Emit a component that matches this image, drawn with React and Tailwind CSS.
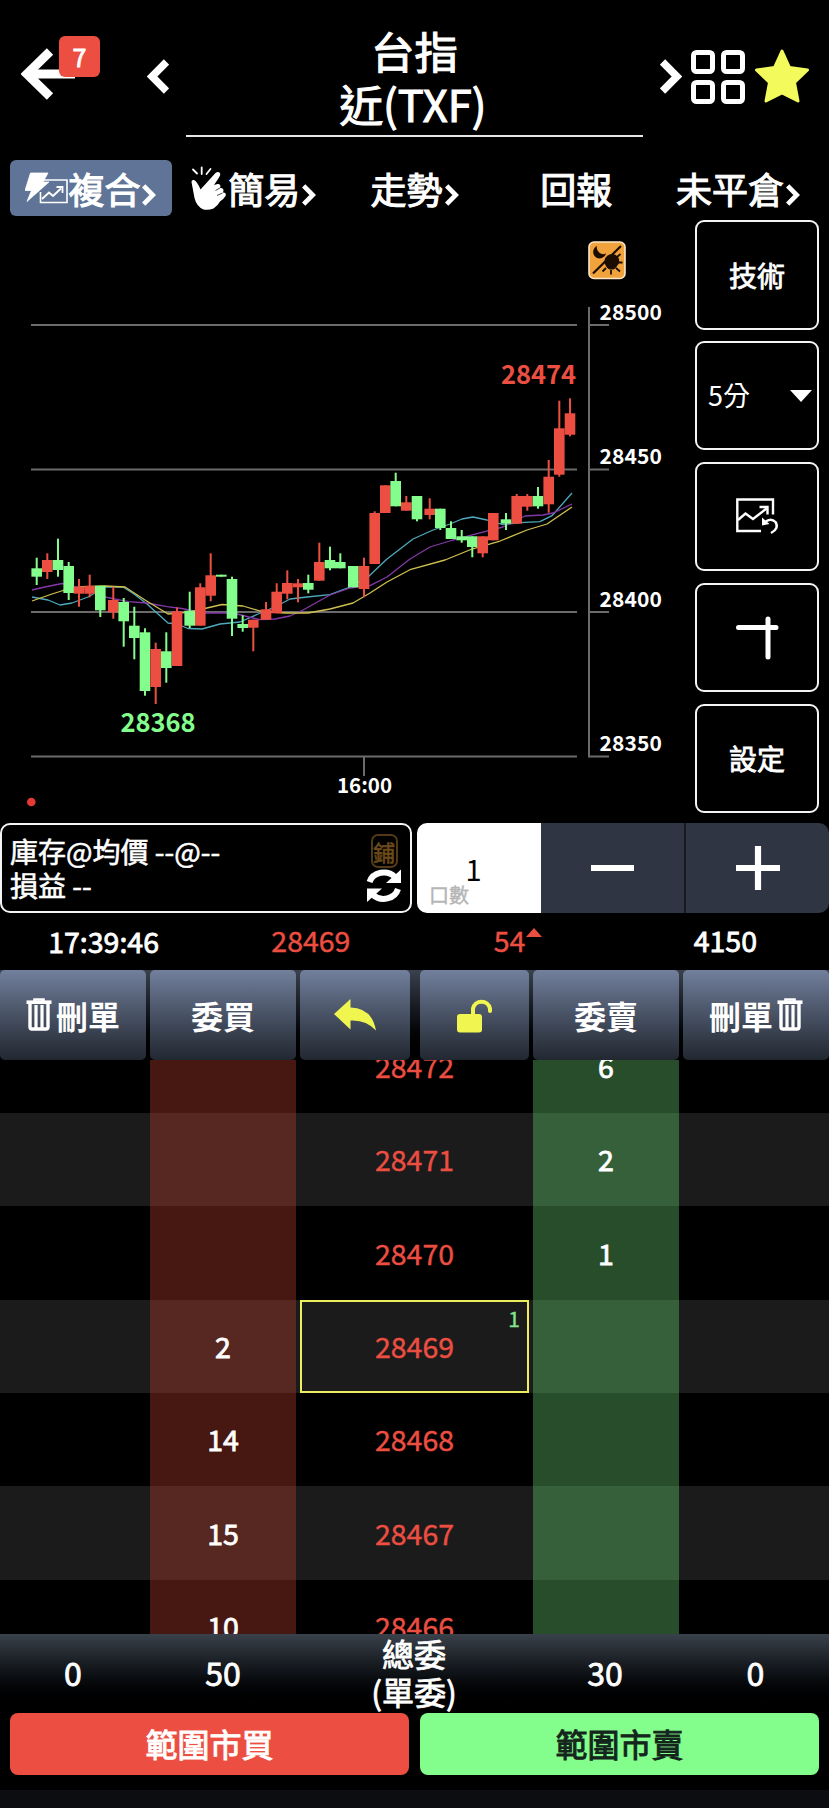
import React, { useState } from "react";

const RED = "#ec4f42";
const GREEN = "#83fd8c";

// x, high, low, body top, body bottom, rising
const candles = [
  [36.7, 557.7, 585, 568.3, 576.7, 0],
  [47.3, 553.3, 579, 560, 572, 1],
  [58, 538.7, 576.7, 560, 570, 0],
  [68.7, 562, 600, 566, 593, 0],
  [79, 579, 606.7, 586.7, 593.7, 1],
  [89.7, 574.7, 597.3, 585.7, 593.7, 1],
  [100.3, 585.7, 617, 585.7, 610.3, 0],
  [113.3, 586.7, 618.7, 600, 612.3, 1],
  [123.7, 598, 646.7, 602, 621.3, 0],
  [134.3, 606.7, 659.3, 625.7, 638, 0],
  [145, 628.3, 695.7, 632.3, 691, 0],
  [155.7, 642.7, 704, 649, 687, 1],
  [166.3, 632.3, 682.7, 651.3, 668, 0],
  [177, 607.3, 666, 611.3, 666, 1],
  [189.7, 591.7, 628, 610.7, 625.7, 0],
  [200.3, 583.3, 625.7, 587.3, 625.7, 1],
  [210.7, 553.3, 601.3, 575.3, 595.7, 1],
  [221.3, 574.7, 576.7, 574.7, 576.7, 0],
  [232, 576.7, 636, 579, 618.7, 0],
  [242.7, 615.3, 631.7, 624, 628, 0],
  [253.3, 619.7, 651.3, 619.7, 627.7, 1],
  [266, 602, 619.7, 609.3, 619.7, 1],
  [276.7, 583.3, 613.3, 591.7, 613.3, 1],
  [287.3, 570.3, 599.3, 583, 593.7, 1],
  [298, 579, 602.3, 583.3, 587.3, 1],
  [308.3, 574.7, 593.3, 583, 589.7, 0],
  [319.3, 542.7, 580.7, 562, 580.7, 1],
  [330, 546.7, 570.3, 560, 568.3, 0],
  [340.3, 553.3, 568.3, 562, 568.3, 0],
  [353.3, 566, 587.3, 566, 587.3, 0],
  [364, 557.7, 597.3, 566, 589, 1],
  [374.7, 511.3, 564, 513, 564, 1],
  [385.3, 485.3, 513, 485.3, 513, 1],
  [395.7, 472.7, 506.3, 481, 506.3, 0],
  [406.3, 496, 510.7, 502.3, 510.7, 1],
  [417, 496, 521.3, 496, 519.3, 0],
  [429.7, 498.3, 519.3, 508.7, 515, 1],
  [440.3, 508.7, 530, 508.7, 528, 0],
  [451, 521.3, 539, 528, 539, 0],
  [461.7, 530, 542.7, 536.3, 540.3, 0],
  [472.3, 536.3, 557.3, 536.3, 547, 0],
  [482.7, 536.3, 557.3, 536.3, 553.3, 1],
  [493.3, 513, 540.3, 513, 540.3, 1],
  [506, 513, 530, 519.3, 523.7, 0],
  [516.7, 494, 523.7, 496, 523.7, 1],
  [527.3, 494, 510.7, 496, 506.7, 1],
  [538, 487, 508.7, 496, 506.3, 0],
  [548.7, 460, 512.7, 476.7, 504.3, 1],
  [559.3, 400.7, 476.7, 428.3, 474.7, 1],
  [570, 398.3, 436.3, 413.3, 434.7, 1],
];

const averages = [
  {
    color: "#4fa9bd",
    points:
      "32,597 48,600 60,605 72,603 88,597 105,587 123,587 134,594 147,604 168,623 177,624 188,628.5 202,629 220,624 240,622 257,614.5 277,606 290,599 307,597 330,594.7 350,587 368,577 387,559 413,539 433,530 450,524 462,519 473,517 487,520 503,524.7 520,522.7 540,521.7 552,515.7 572,493",
  },
  {
    color: "#8438a8",
    points:
      "32,590 45,587 62,583.5 80,588 105,597 128,601.7 147,603 167,606.7 182,608.5 203,613 233,613 260,619.7 275,619 290,616 303,610 330,595 350,588 370,585.7 387,577 410,559 430,547 453,540 477,533.7 503,527 525,516 543,515 553,513 572,504",
  },
  {
    color: "#cfc04e",
    points:
      "32,601 52,594 63,590.5 80,587 105,586 125,587 145,600 168,614 190,612 207,608 222,604.5 243,606 260,611 285,613 308,613 330,609 353,603 370,593 387,582 410,569.7 445,560 472,549 500,541 527,530 547,524 572,507",
  },
];

const priceTicks = [
  [325, "28500"],
  [469.5, "28450"],
  [612, "28400"],
  [756.5, "28350"],
];

const orderRows = [
  { price: "28472", ask: "6" },
  { price: "28471", ask: "2" },
  { price: "28470", ask: "1" },
  { price: "28469", bid: "2", last: "1" },
  { price: "28468", bid: "14" },
  { price: "28467", bid: "15" },
  { price: "28466", bid: "10" },
];

const BOOK_COLS = "grid grid-cols-[150px_150px_229px_4px_146px_150px]";

const Chevron = ({ left, className }) => (
  <svg viewBox="0 0 22 35" className={className} fill="none" stroke="currentColor" strokeWidth="7.5">
    <path d={left ? "M19.5 3 L5 17.5 L19.5 32" : "M2.5 3 L17 17.5 L2.5 32"} strokeLinejoin="miter" />
  </svg>
);

const Trash = () => (
  <svg viewBox="0 0 26 34" className="h-[34px] w-[26px]" fill="none" stroke="currentColor">
    <path d="M0.5 4.200 H25.5" strokeWidth="3.6" />
    <path d="M8.5 3 V1.500 H17.5 V3" strokeWidth="2.6" />
    <path d="M4 5 V29 Q4 31 6 31 H20 Q22 31 22 29 V5" strokeWidth="3.4" />
    <path d="M10 7 V30 M16 7 V30" strokeWidth="3.2" />
  </svg>
);

const BoltChartIcon = () => (
  <svg viewBox="25 172 43 34" className="h-[34px] w-[43px]" fill="none">
    <path d="M40 181 H67 V203.500 H40.500 V193" stroke="#fff" strokeWidth="1.6" />
    <path d="M42 200 L49 193.500 L53 197 L61 189.500" stroke="#fff" strokeWidth="2" />
    <path d="M56.500 188 H62.500 V194" stroke="#fff" strokeWidth="1.8" />
    <path d="M30.500 174 H48 L43 183 H49 L27 202.500 L31.500 191.500 H25 Z" fill="#fff" stroke="#fff" strokeWidth="0.8" />
  </svg>
);

const ClapIcon = () => (
  <svg viewBox="193 166 36 45" className="ml-[2px] mr-px h-[45px] w-[36px] shrink-0" fill="none">
    <path d="M195 169.500 L199 173.500 M203.700 167.500 V174 M212.500 169 L208.500 174" stroke="#fff" strokeWidth="1.8" strokeLinecap="round" />
    <path
      d="M193.500 182 Q193.500 179.500 196 180 Q199 181 202.500 189.500 L217.500 173 Q220 171 222 173 Q223 175 221 177.500 L216 185 L219.500 184 Q222 183.500 222.500 186 L222 188 Q225.500 187.500 225.500 190.500 L225 192.500 Q229 192.500 227.500 196 Q225 200 222 201.500 Q220 205.500 215.500 208.500 Q210.500 210.500 205.500 209.500 Q198.500 206.500 196.500 198 Z"
      fill="#fff"
    />
    <path d="M222 188 L217.500 190.500 M224.500 193 L219 195.500" stroke="#000" strokeWidth="0.7" />
  </svg>
);

const SessionIcon = () => (
  <g>
    <rect x="589" y="242" width="36" height="36.500" rx="5" fill="#f0a23c" stroke="#fbe7c8" strokeWidth="1.6" />
    <path d="M593 273.500 L621 246" stroke="#1a0d00" strokeWidth="2.2" />
    <path d="M597 246 A6.500 6.500 0 1 0 606 253.500 A6.500 6.500 0 0 1 597 246 Z" fill="#1a0d00" />
    <path d="M606 266 A7 7 0 0 1 618 257 A7 7 0 0 1 617 266 A6 6 0 0 1 606 266 Z" fill="#1a0d00" />
    <path d="M618 262.500 H622.500 M616 268 L620 271.500 M611 270 V274.500 M606 268 L602.500 271.500 M617 257 L620.500 254" stroke="#1a0d00" strokeWidth="1.8" />
  </g>
);

const Chart = () => (
  <svg viewBox="0 220 695 593" className="h-[593px] w-[695px] shrink-0 font-bold [-webkit-text-stroke:0px]">
    <g stroke="#6b6b6b" strokeWidth="2">
      {priceTicks.map(([y]) => (
        <path key={y} d={`M31 ${y} H577 M589 ${y} H609`} />
      ))}
      <path d="M589 307 V757.500 M364 757 V776" />
    </g>
    {averages.map((line) => (
      <polyline key={line.color} points={line.points} fill="none" stroke={line.color} strokeWidth="1.3" strokeLinejoin="round" />
    ))}
    {candles.map(([x, high, low, top, bottom, up]) => (
      <g key={x} fill={up ? RED : GREEN}>
        <rect x={x - 1} y={high} width="2" height={low - high} />
        <rect x={x - 5.3} y={top} width="10.6" height={bottom - top} />
      </g>
    ))}
    <g fill="#fff" fontSize="21">
      {priceTicks.map(([y, label]) => (
        <text key={label} x="599.500" y={y - 5.5} textLength="62.500">{label}</text>
      ))}
      <text x="364.500" y="793" textAnchor="middle" fontSize="20.500">16:00</text>
    </g>
    <g fontSize="25.500">
      <text x="501" y="383.500" fill={RED} textLength="75">28474</text>
      <text x="120.500" y="731.500" fill={GREEN} textLength="75">28368</text>
    </g>
    <circle cx="31.300" cy="802" r="4.300" fill="#e53935" />
    <SessionIcon />
  </svg>
);

const SideButton = ({ children }) => (
  <button className="flex h-[109.5px] w-[124px] items-center justify-center rounded-[9px] border-2 border-gray-100 text-[28px]">
    {children}
  </button>
);

const Tab = ({ active, icon, label, arrow }) => (
  <div className={`flex h-14 flex-1 items-center justify-center rounded-md ${active ? "bg-[#5f7496]" : ""}`}>
    {icon}
    <span className="text-[36px] leading-none whitespace-nowrap">{label}</span>
    {arrow && <Chevron className="mt-[13px] ml-[2px] h-[22px] w-[14px] shrink-0" />}
  </div>
);

const HeadButton = ({ className, children }) => (
  <button className={`flex h-full items-center justify-center gap-1 rounded-[5px] bg-linear-to-b from-[#72809d] to-[#222831] text-[32px] leading-none font-bold [-webkit-text-stroke:0px] ${className}`}>
    {children}
  </button>
);

const App = () => {
  const [qty, setQty] = useState(1);

  return (
    <div className="flex h-[1808px] w-[829px] flex-col overflow-hidden bg-black font-['Noto_Sans_CJK_TC',sans-serif] text-white [-webkit-text-stroke:0.8px]">
      {/* title bar */}
      <header className="flex h-[160px] shrink-0 pt-6">
        <div className="relative w-[147px]">
          <svg viewBox="0 0 54 52" className="mt-6 ml-[21px] h-[52px] w-[54px]" fill="none" stroke="#fff" strokeWidth="9">
            <path d="M29 3.500 L6 26 L29 48.500 M5 26 H54" />
          </svg>
          <span className="absolute top-3 left-[59px] flex h-[41px] w-[41px] items-center justify-center rounded-md bg-[#ec4f42] text-[25px]">7</span>
        </div>
        <Chevron left className="mt-[35px] h-[35px] w-[22px]" />
        <div className="ml-[17px] flex h-[113px] w-[457px] flex-col items-center border-b-[2px] border-gray-200 text-[43.5px] leading-[53px] [-webkit-text-stroke:1.1px]">
          <span>台指</span>
          <span className="-ml-[3px]">近(TXF)</span>
        </div>
        <Chevron className="mt-[35px] ml-[17px] h-[35px] w-[22px]" />
        <svg viewBox="0 0 54 54" className="mt-[26px] ml-[9px] h-[54px] w-[54px]" fill="none" stroke="#fff" strokeWidth="5">
          <rect x="2.500" y="2.500" width="19" height="19" rx="3" />
          <rect x="32.500" y="2.500" width="19" height="19" rx="3" />
          <rect x="2.500" y="32.500" width="19" height="19" rx="3" />
          <rect x="32.500" y="32.500" width="19" height="19" rx="3" />
        </svg>
        <svg viewBox="0 0 54 54" className="mt-[25px] ml-[10px] h-[54px] w-[54px]" fill="#f2fb5b" stroke="#f2fb5b" strokeWidth="3" strokeLinejoin="round">
          <path d="M27 2 L34.500 18.500 L52.500 21 L39.500 33.500 L43 52 L27 44 L11 52 L14.500 33.500 L1.500 21 L19.500 18.500 Z" />
        </svg>
      </header>

      {/* tabs */}
      <nav className="flex h-[60px] shrink-0 px-[10px] [-webkit-text-stroke:1.1px]">
        <Tab active icon={<BoltChartIcon />} label="複合" arrow />
        <Tab icon={<ClapIcon />} label="簡易" arrow />
        <Tab label="走勢" arrow />
        <Tab label="回報" />
        <Tab label="未平倉" arrow />
      </nav>

      {/* chart and its tools */}
      <section className="flex h-[603px] shrink-0">
        <Chart />
        <div className="flex h-[593px] flex-col justify-between">
          <SideButton>技術</SideButton>
          <SideButton>
            <span className="flex-1 pl-[11px] text-left text-[27px] [-webkit-text-stroke:0px]">5分</span>
            <svg viewBox="0 0 22 12" className="mr-[5px] h-3 w-[22px]" fill="#fff">
              <path d="M0 0 H22 L11 12 Z" />
            </svg>
          </SideButton>
          <SideButton>
            <svg viewBox="735 498 44 37" className="h-[37px] w-[44px]" fill="none" stroke="#fff" strokeWidth="2.4">
              <path d="M773 514.500 V499.500 H737.300 V531 H761" />
              <path d="M738 520 L745.500 513.500 L753 519 L766.500 508.500" />
              <path d="M759.500 507 H767.500 V514.500" />
              <path d="M765 522 Q771 517.500 775.500 522 Q779.500 528.500 771 533" />
              <path d="M762 517.500 V525.500 L769.500 524 Z" fill="#fff" stroke="none" />
            </svg>
          </SideButton>
          <SideButton>
            <svg viewBox="0 0 44 46" className="h-[46px] w-[44px]" fill="none" stroke="#fff" strokeWidth="5" strokeLinecap="round">
              <path d="M3.500 13.500 H41 M33 5 V43" />
            </svg>
          </SideButton>
          <SideButton>設定</SideButton>
        </div>
      </section>

      {/* position and quantity */}
      <section className="flex h-[90px] shrink-0 gap-[5px]">
        <div className="flex w-[412px] justify-between rounded-[10px] border-2 border-gray-100 pl-2 text-[28px] leading-[34px] [-webkit-text-stroke:0.6px]">
          <div className="pt-[9px]">
            <p>庫存@均價 --@--</p>
            <p>損益 --</p>
          </div>
          <div className="mr-2 flex w-[36px] flex-col items-center pt-[9px]">
            <span className="flex h-[34px] w-[27px] items-center justify-center rounded-[7px] border-2 border-[#523a17] text-[22px] leading-none text-[#6b4a1a]">鋪</span>
            <svg viewBox="0 0 36 36" className="h-[36px] w-[36px]" fill="none" stroke="#fff" strokeWidth="6">
              <path d="M3.500 14 A15 13.500 0 0 1 29 9" />
              <path d="M35 1.500 V15 H20 Z" fill="#fff" stroke="none" />
              <path d="M32 21 A15 13.500 0 0 1 7 27" />
              <path d="M1 34 V20.500 H16 Z" fill="#fff" stroke="none" />
            </svg>
          </div>
        </div>
        <div className="flex flex-1 overflow-hidden rounded-[10px]">
          <div className="relative w-[124px] bg-white pt-[23px] pr-[11px] text-center text-[29px] leading-[44px] text-black [-webkit-text-stroke:0px]">
            {qty}
            <span className="absolute bottom-[6px] left-3 text-[20px] leading-6 text-[#b5b5b5] [-webkit-text-stroke:0.4px]">口數</span>
          </div>
          <button className="flex w-[143px] items-center justify-center bg-[#2f3542]" onClick={() => setQty(Math.max(1, qty - 1))}>
            <span className="h-[6px] w-[43px] bg-white" />
          </button>
          <button className="flex flex-1 items-center justify-center border-l-2 border-[#151a22] bg-[#2f3542]" onClick={() => setQty(qty + 1)}>
            <svg viewBox="0 0 44 44" className="h-11 w-11" stroke="#fff" strokeWidth="6.200">
              <path d="M0 22 H44 M22 0 V44" />
            </svg>
          </button>
        </div>
      </section>

      {/* last trade */}
      <section className="grid h-[57px] shrink-0 grid-cols-4 items-center pb-[3px] text-center text-[28.5px] leading-none">
        <span className="pt-[3px]">17:39:46</span>
        <span className="text-[#ec4f42] [-webkit-text-stroke:0.4px]">28469</span>
        <span className="flex justify-center text-[#ec4f42] [-webkit-text-stroke:0.4px]">
          54
          <svg viewBox="0 0 16 9" className="mt-[2px] ml-px h-[9px] w-4" fill="currentColor">
            <path d="M8 0 L16 9 H0 Z" />
          </svg>
        </span>
        <span>4150</span>
      </section>

      {/* order book header */}
      <section className="flex h-[90px] shrink-0 gap-1 bg-linear-to-b from-[#3a424e] to-black">
        <HeadButton className="w-[146px]"><Trash />刪單</HeadButton>
        <HeadButton className="w-[146px]">委買</HeadButton>
        <HeadButton className="w-[110px]">
          <svg viewBox="0 0 42 32" className="h-8 w-[42px]" fill="#f0f64f">
            <path d="M0 15 L16.500 0 V8.500 Q38 9 42 31.500 Q32 20.500 16.500 21.500 V30.500 Z" />
          </svg>
        </HeadButton>
        <HeadButton className="ml-[6px] w-[109px]">
          <svg viewBox="0 0 35 35" className="h-[35px] w-[35px]" fill="none">
            <rect x="0" y="16" width="25" height="18.500" rx="3" fill="#f0f64f" />
            <path d="M16 18 V10.500 A8.700 8.700 0 0 1 33 10.500 V13" stroke="#f0f64f" strokeWidth="4" strokeLinecap="round" />
          </svg>
        </HeadButton>
        <HeadButton className="w-[146px]">委賣</HeadButton>
        <HeadButton className="w-[146px]">刪單<Trash /></HeadButton>
      </section>

      {/* order book */}
      <section className="h-[574px] shrink-0 overflow-hidden text-[28.5px]">
        <div className="-mt-[40.5px]">
          {orderRows.map((row, i) => (
            <div key={row.price} className={`${BOOK_COLS} h-[93.4px] ${i % 2 ? "bg-[#1b1b1b]" : ""}`}>
              <div />
              <div className={`mr-1 flex items-center justify-center ${i % 2 ? "bg-[#572722]" : "bg-[#471712]"}`}>{row.bid}</div>
              <div className={`relative flex items-center justify-center text-[#ec4f42] [-webkit-text-stroke:0.4px] ${row.last ? "border-2 border-[#ecee5e]" : ""}`}>
                {row.price}
                {row.last && <span className="absolute top-[2px] right-[7px] text-[21px] leading-7 text-[#83e58c]">{row.last}</span>}
              </div>
              <div />
              <div className={`flex items-center justify-center ${i % 2 ? "bg-[#35603a]" : "bg-[#274d2b]"}`}>{row.ask}</div>
              <div />
            </div>
          ))}
        </div>
      </section>

      {/* totals */}
      <section className="grid h-[77px] shrink-0 grid-cols-[146px_154px_228px_154px_147px] items-center bg-linear-to-b from-[#39414b] to-black pb-[3px] text-center text-[32px] leading-[38px]">
        <span>0</span>
        <span>50</span>
        <span>總委<br />(單委)</span>
        <span>30</span>
        <span>0</span>
      </section>

      {/* market orders */}
      <section className="flex h-[79px] shrink-0 gap-[11px] px-[10px] pt-[2px] text-[32px] [-webkit-text-stroke:1px]">
        <button className="h-[62px] flex-1 rounded-lg bg-[#ec4f42] pb-[2px]">範圍市買</button>
        <button className="h-[62px] flex-1 rounded-lg bg-[#83fd8c] pb-[2px] text-[#14261c]">範圍市賣</button>
      </section>
      <footer className="flex-1 bg-[#0c0d11]" />
    </div>
  );
};

export default App;
